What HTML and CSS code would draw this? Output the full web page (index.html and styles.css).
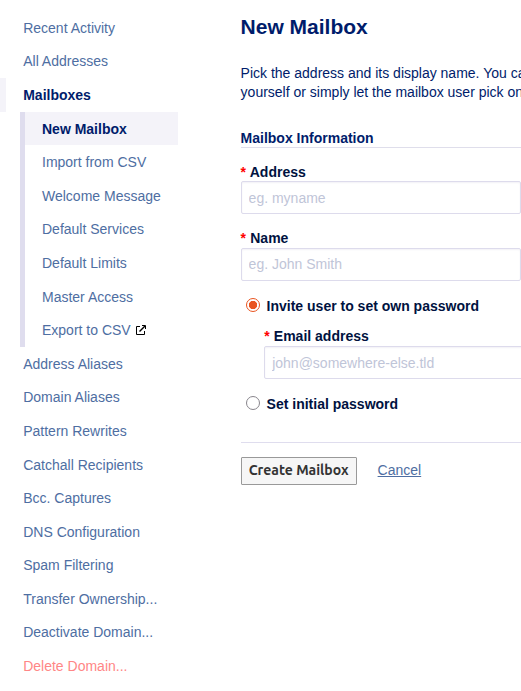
FILE: index.html
```html
<!DOCTYPE html>
<html lang="en">
<head>
<meta charset="utf-8">
<title>New Mailbox</title>
<link rel="stylesheet" href="styles.css">
</head>
<body>
<div class="page">
  <nav class="sidebar">
    <ul class="menu">
      <li><a>Recent Activity</a></li>
      <li><a>All Addresses</a></li>
      <li class="current"><a>Mailboxes</a>
        <ul class="submenu">
          <li class="active"><a>New Mailbox</a></li>
          <li><a>Import from CSV</a></li>
          <li><a>Welcome Message</a></li>
          <li><a>Default Services</a></li>
          <li><a>Default Limits</a></li>
          <li><a>Master Access</a></li>
          <li><a>Export to CSV<svg class="external" width="12" height="12" viewBox="0 0 12 12" fill="none" stroke="#000"><path d="M5 2.500H1.500V10.500H9.500V7"/><path d="M7 1.500H10.500V5"/><path d="M4.500 7.500L10 2" stroke-width="1.400"/></svg></a></li>
        </ul>
      </li>
      <li><a>Address Aliases</a></li>
      <li><a>Domain Aliases</a></li>
      <li><a>Pattern Rewrites</a></li>
      <li><a>Catchall Recipients</a></li>
      <li><a>Bcc. Captures</a></li>
      <li><a>DNS Configuration</a></li>
      <li><a>Spam Filtering</a></li>
      <li><a>Transfer Ownership...</a></li>
      <li><a>Deactivate Domain...</a></li>
      <li class="danger"><a>Delete Domain...</a></li>
    </ul>
  </nav>
  <main class="content">
    <h1>New Mailbox</h1>
    <p class="intro">Pick the address and its display name. You can<br>yourself or simply let the mailbox user pick one</p>
    <form>
      <h2>Mailbox Information</h2>
      <div class="field">
        <label for="address"><span class="required">*</span> Address</label>
        <input id="address" type="text" placeholder="eg. myname">
      </div>
      <div class="field">
        <label for="name"><span class="required">*</span> Name</label>
        <input id="name" class="raised" type="text" placeholder="eg. John Smith">
      </div>
      <label class="choice"><input type="radio" name="mode" checked>Invite user to set own password</label>
      <div class="field nested">
        <label for="email"><span class="required">*</span> Email address</label>
        <input id="email" type="text" placeholder="john@somewhere-else.tld">
      </div>
      <label class="choice"><input type="radio" name="mode">Set initial password</label>
      <div class="actions">
        <button type="button">Create Mailbox</button>
        <a class="cancel">Cancel</a>
      </div>
    </form>
  </main>
</div>
</body>
</html>
```
FILE: styles.css
```css
* { box-sizing: border-box; }
body {
  margin: 0;
  background: #fff;
  color: #001c6b;
  font: 14px/19.6px "Liberation Sans", Arial, sans-serif;
}
.page {
  display: flex;
  width: 521px;
  height: 691px;
  overflow: hidden;
}
.sidebar {
  flex: none;
  width: 178px;
  padding-top: 11px;
}
ul { list-style: none; margin: 0; padding: 0; }
.menu a {
  display: block;
  height: 33.6px;
  padding: 7.8px 0 0 23.2px;
  color: #4e6ea2;
  white-space: nowrap;
}
.menu .current > a {
  font-weight: bold;
  color: #001c6b;
  background: linear-gradient(#f4f3f9, #f4f3f9) no-repeat 0 0 / 6px 100%;
}
.menu .submenu { margin-left: 20px; border-left: 5px solid #dfddee; }
.menu .submenu a { padding-left: 17px; }
.menu .active a {
  font-weight: bold;
  color: #001c6b;
  background: #f4f3f9;
}
.menu .danger a { color: #ff8686; }
.external { margin-left: 4px; vertical-align: -1px; }
.content {
  flex: none;
  width: 280.400px;
  margin-left: 62.600px;
}
h1 {
  margin: 12px 0 0;
  font-size: 21px;
  line-height: 30px;
}
.intro {
  margin: 22px 0 0;
  line-height: 19px;
  white-space: nowrap;
}
h2 {
  margin: 26px 0 0;
  height: 20px;
  border-bottom: 1px solid #dfdeeb;
  font-size: 14px;
  line-height: 20px;
}
.field { margin-top: 14px; }
.field label {
  display: block;
  height: 19px;
  line-height: 20px;
  font-weight: bold;
  color: #00123f;
}
.field + .field label { height: 20px; }
.required { color: #f00; margin-right: 0.300px; }
.field input {
  display: block;
  width: 280px;
  height: 33px;
  padding: 0 7px;
  border: 1px solid #dddbec;
  border-radius: 2px;
  background: #fff;
  box-shadow: inset 0 1px 2px #f2f1f6;
  color: #00123f;
  font: inherit;
}
.field .raised { padding-bottom: 2px; }
.field input::placeholder { color: #bfc5d8; opacity: 1; }
.choice {
  display: flex;
  align-items: center;
  height: 20px;
  margin-top: 16px;
  padding-left: 5px;
  font-weight: bold;
  color: #00123f;
}
.choice input {
  flex: none;
  appearance: none;
  width: 14px;
  height: 14px;
  margin: -4px 7px 0 0;
  border: 1px solid #88858c;
  border-radius: 50%;
  background: #fff;
}
.choice input:checked {
  border-color: #e95420;
  background: radial-gradient(circle, #e95420 3.800px, #fff 4.500px);
}
.nested { margin: 10px 0 0 23.600px; }
.nested label { height: 19px; line-height: 19px; }
.nested + .choice { margin-top: 16px; }
.actions {
  display: flex;
  align-items: center;
  margin-top: 27px;
  padding-top: 14px;
  border-top: 1px solid #dfddee;
}
button {
  width: 116px;
  height: 28px;
  padding: 0 0 2px;
  border: 1px solid #999;
  border-radius: 1px;
  background: #f6f6f6;
  color: #333;
  font: bold 14px/24px Ubuntu, "Noto Sans", sans-serif;
}
.cancel {
  margin-left: 21px;
  color: #4e6ea2;
  text-decoration: underline;
}
```
